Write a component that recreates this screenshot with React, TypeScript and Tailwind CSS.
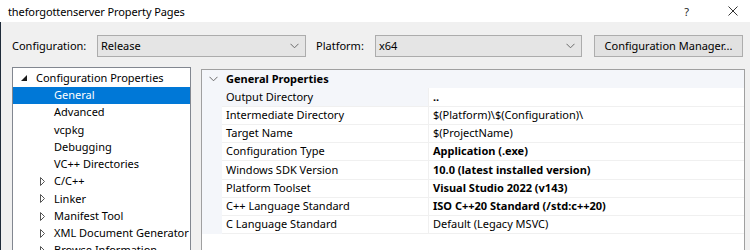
import React from "react";

const font = { fontFamily: '"Noto Sans", "Segoe UI", sans-serif' };

function Chevron({ className = "" }: { className?: string }) {
  return (
    <svg width="9" height="6" viewBox="0 0 9 6" className={className}>
      <path d="M0.5 0.8 L4.5 4.8 L8.5 0.8" fill="none" stroke="#6b6b6b" strokeWidth="1" />
    </svg>
  );
}

function Combo({ value, width }: { value: string; width: string }) {
  return (
    <div
      className={`${width} h-[22px] flex items-center justify-between bg-[#e5e5e5] border border-[#acacac] pl-[3px] pr-[6px]`}
    >
      <span className="text-[11px] text-black">{value}</span>
      <Chevron />
    </div>
  );
}

const treeItems: { label: string; level: number; expander?: "open" | "closed"; selected?: boolean }[] = [
  { label: "Configuration Properties", level: 0, expander: "open" },
  { label: "General", level: 1, selected: true },
  { label: "Advanced", level: 1 },
  { label: "vcpkg", level: 1 },
  { label: "Debugging", level: 1 },
  { label: "VC++ Directories", level: 1 },
  { label: "C/C++", level: 1, expander: "closed" },
  { label: "Linker", level: 1, expander: "closed" },
  { label: "Manifest Tool", level: 1, expander: "closed" },
  { label: "XML Document Generator", level: 1, expander: "closed" },
  { label: "Browse Information", level: 1, expander: "closed" },
];

const props: { name: string; value: string; bold?: boolean; selected?: boolean }[] = [
  { name: "Output Directory", value: "..", bold: true, selected: true },
  { name: "Intermediate Directory", value: "$(Platform)\\$(Configuration)\\" },
  { name: "Target Name", value: "$(ProjectName)" },
  { name: "Configuration Type", value: "Application (.exe)", bold: true },
  { name: "Windows SDK Version", value: "10.0 (latest installed version)", bold: true },
  { name: "Platform Toolset", value: "Visual Studio 2022 (v143)", bold: true },
  { name: "C++ Language Standard", value: "ISO C++20 Standard (/std:c++20)", bold: true },
  { name: "C Language Standard", value: "Default (Legacy MSVC)" },
];

export default function App() {
  return (
    <div className="w-[750px] h-[250px] bg-[#f0f0f0] overflow-hidden flex flex-col text-black" style={font}>
      {/* Title bar */}
      <div className="h-[22px] bg-white flex items-center pl-[8px] shrink-0">
        <span className="text-[11px] leading-none tracking-[-0.1px]">theforgottenserver Property Pages</span>
        <div className="flex-1" />
        <span className="text-[11px] leading-none text-[#222] mr-[39px]">?</span>
        <svg width="10" height="10" viewBox="0 0 10 10" className="mr-[12px]">
          <path d="M0.5 0.5 L9.5 9.5 M9.5 0.5 L0.5 9.5" stroke="#333" strokeWidth="1" />
        </svg>
      </div>

      {/* Body */}
      <div className="flex-1 flex flex-col border-l border-[#1f2b3a]">
        {/* Config row */}
        <div className="flex items-center mt-[13px] h-[22px]">
          <span className="text-[11px] ml-[11px] w-[85px]">Configuration:</span>
          <Combo value="Release" width="w-[209px]" />
          <span className="text-[11px] ml-[10px] w-[59px]">Platform:</span>
          <Combo value="x64" width="w-[207px]" />
          <div className="ml-[12px] w-[149px] h-[22px] bg-[#e1e1e1] border border-[#adadad] flex items-center justify-center text-[11px]">
            Configuration Manager...
          </div>
        </div>

        {/* Panels */}
        <div className="flex items-start mt-[10px] flex-1">
          {/* Tree */}
          <div className="ml-[11px] w-[179px] h-[200px] bg-white border border-[#828790] pt-[1.5px]">
            {treeItems.map((it) => (
              <div
                key={it.label}
                className={`h-[17.25px] flex items-center text-[11px] whitespace-nowrap ${
                  it.selected ? "bg-[#0078d7] text-white" : ""
                }`}
              >
                {it.level === 0 ? (
                  <>
                    <svg width="6" height="6" viewBox="0 0 6 6" className="ml-[8px] mr-[9px]">
                      <path d="M6 0 L6 6 L0 6 Z" fill="#1a1a1a" />
                    </svg>
                    <span>{it.label}</span>
                  </>
                ) : (
                  <>
                    <div className="w-[41px] shrink-0 flex justify-end pr-[9px]">
                      {it.expander === "closed" && (
                        <svg width="5" height="9" viewBox="0 0 5 9">
                          <path d="M0.5 0.5 L4.5 4.5 L0.5 8.5 Z" fill="none" stroke="#555" strokeWidth="1" />
                        </svg>
                      )}
                    </div>
                    <span>{it.label}</span>
                  </>
                )}
              </div>
            ))}
          </div>

          {/* Property grid */}
          <div className="ml-[10px] mt-[2px] w-[544px] h-[200px] bg-white border border-[#a0a0a0] flex flex-col">
            <div className="h-[18.25px] bg-[#f4f6fa] flex items-center shrink-0">
              <div className="w-[20px] flex justify-center pl-[2px]">
                <Chevron />
              </div>
              <span className="text-[11px] font-bold pl-[4px]">General Properties</span>
            </div>
            {props.map((p) => (
              <div key={p.name} className="h-[18.25px] flex shrink-0">
                <div className="w-[20px] bg-[#f4f6fa]" />
                <div
                  className={`w-[206px] flex items-center pl-[4px] text-[11px] border-b border-[#f0f0f0] whitespace-nowrap ${
                    p.selected ? "bg-[#f4f6fa]" : "bg-white"
                  }`}
                >
                  {p.name}
                </div>
                <div
                  className={`flex-1 flex items-center pl-[4px] text-[11px] border-b border-l border-[#f0f0f0] whitespace-nowrap ${
                    p.bold ? "font-bold" : ""
                  }`}
                >
                  {p.value}
                </div>
              </div>
            ))}
          </div>
        </div>
      </div>
    </div>
  );
}
